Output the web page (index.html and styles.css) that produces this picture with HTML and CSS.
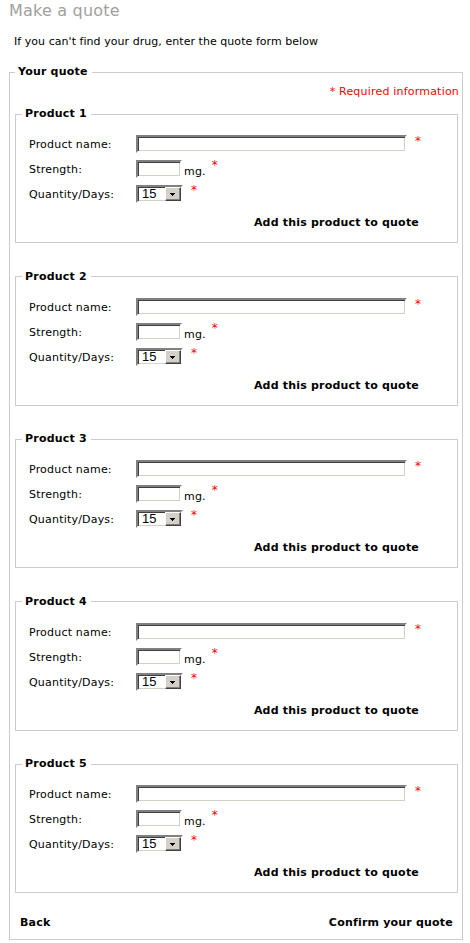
FILE: index.html
```html
<!DOCTYPE html>
<html>
<head>
<meta charset="utf-8">
<title>Make a quote</title>
<link rel="stylesheet" href="styles.css">
</head>
<body>
<h1 class="title">Make a quote</h1>
<p class="intro">If you can't find your drug, enter the quote form below</p>
<form class="quote-form">
<fieldset class="quote">
  <legend class="quote-legend">Your quote</legend>
  <p class="required">* Required information</p>

  <fieldset class="product">
    <legend class="product-legend">Product 1</legend>
    <div class="rows">
      <label class="label">Product name:</label>
      <div class="field"><input class="input input-name" type="text"><span class="req req-name">*</span></div>
      <label class="label">Strength:</label>
      <div class="field"><input class="input input-strength" type="text"><span class="unit">mg.</span><span class="req req-strength">*</span></div>
      <label class="label">Quantity/Days:</label>
      <div class="field"><span class="select"><select class="select-native"><option>15</option></select><span class="select-btn"><svg width="5" height="3" viewBox="0 0 5 3"><path d="M0 0h5v1H0zM1 1h3v1H1zM2 2h1v1H2z" fill="#000"/></svg></span></span><span class="req req-qty">*</span></div>
    </div>
    <div class="add"><a class="add-link" href="#">Add this product to quote</a></div>
  </fieldset>

  <fieldset class="product">
    <legend class="product-legend">Product 2</legend>
    <div class="rows">
      <label class="label">Product name:</label>
      <div class="field"><input class="input input-name" type="text"><span class="req req-name">*</span></div>
      <label class="label">Strength:</label>
      <div class="field"><input class="input input-strength" type="text"><span class="unit">mg.</span><span class="req req-strength">*</span></div>
      <label class="label">Quantity/Days:</label>
      <div class="field"><span class="select"><select class="select-native"><option>15</option></select><span class="select-btn"><svg width="5" height="3" viewBox="0 0 5 3"><path d="M0 0h5v1H0zM1 1h3v1H1zM2 2h1v1H2z" fill="#000"/></svg></span></span><span class="req req-qty">*</span></div>
    </div>
    <div class="add"><a class="add-link" href="#">Add this product to quote</a></div>
  </fieldset>

  <fieldset class="product">
    <legend class="product-legend">Product 3</legend>
    <div class="rows">
      <label class="label">Product name:</label>
      <div class="field"><input class="input input-name" type="text"><span class="req req-name">*</span></div>
      <label class="label">Strength:</label>
      <div class="field"><input class="input input-strength" type="text"><span class="unit">mg.</span><span class="req req-strength">*</span></div>
      <label class="label">Quantity/Days:</label>
      <div class="field"><span class="select"><select class="select-native"><option>15</option></select><span class="select-btn"><svg width="5" height="3" viewBox="0 0 5 3"><path d="M0 0h5v1H0zM1 1h3v1H1zM2 2h1v1H2z" fill="#000"/></svg></span></span><span class="req req-qty">*</span></div>
    </div>
    <div class="add"><a class="add-link" href="#">Add this product to quote</a></div>
  </fieldset>

  <fieldset class="product">
    <legend class="product-legend">Product 4</legend>
    <div class="rows">
      <label class="label">Product name:</label>
      <div class="field"><input class="input input-name" type="text"><span class="req req-name">*</span></div>
      <label class="label">Strength:</label>
      <div class="field"><input class="input input-strength" type="text"><span class="unit">mg.</span><span class="req req-strength">*</span></div>
      <label class="label">Quantity/Days:</label>
      <div class="field"><span class="select"><select class="select-native"><option>15</option></select><span class="select-btn"><svg width="5" height="3" viewBox="0 0 5 3"><path d="M0 0h5v1H0zM1 1h3v1H1zM2 2h1v1H2z" fill="#000"/></svg></span></span><span class="req req-qty">*</span></div>
    </div>
    <div class="add"><a class="add-link" href="#">Add this product to quote</a></div>
  </fieldset>

  <fieldset class="product">
    <legend class="product-legend">Product 5</legend>
    <div class="rows">
      <label class="label">Product name:</label>
      <div class="field"><input class="input input-name" type="text"><span class="req req-name">*</span></div>
      <label class="label">Strength:</label>
      <div class="field"><input class="input input-strength" type="text"><span class="unit">mg.</span><span class="req req-strength">*</span></div>
      <label class="label">Quantity/Days:</label>
      <div class="field"><span class="select"><select class="select-native"><option>15</option></select><span class="select-btn"><svg width="5" height="3" viewBox="0 0 5 3"><path d="M0 0h5v1H0zM1 1h3v1H1zM2 2h1v1H2z" fill="#000"/></svg></span></span><span class="req req-qty">*</span></div>
    </div>
    <div class="add"><a class="add-link" href="#">Add this product to quote</a></div>
  </fieldset>

  <div class="footer">
    <a class="footer-link" href="#">Back</a>
    <a class="footer-link" href="#">Confirm your quote</a>
  </div>
</fieldset>
</form>
</body>
</html>
```

FILE: styles.css
```css
html, body {
  margin: 0;
  padding: 0;
  background: #fff;
}

body {
  font-family: "DejaVu Sans", Verdana, sans-serif;
  font-size: 11px;
  letter-spacing: 0.2px;
  color: #000;
}

.title {
  margin: 0;
  padding: 2px 0 0 9px;
  font-size: 16px;
  font-weight: normal;
  line-height: 18px;
  color: #a0a0a0;
}

.intro {
  margin: 15px 0 0 0;
  padding-left: 14px;
  font-size: 11px;
  letter-spacing: 0.05px;
  line-height: 14px;
}

.quote-form {
  margin: 0;
}

.quote {
  margin: 16px 7px 0 9px;
  padding: 6px 4px 9px 5px;
  border: 1px solid #cccccc;
  min-width: 0;
}

.quote-legend {
  padding: 0 4px 0 3px;
  font-weight: bold;
  font-size: 11px;
  line-height: 14px;
}

.required {
  margin: 0 -1px 0 0;
  text-align: right;
  color: #ff0000;
  font-size: 11px;
  line-height: 14px;
}

.product {
  margin: 8px 0 0 0;
  padding: 14px 0 12px 13px;
  border: 1px solid #cccccc;
  min-width: 0;
}

.product + .product {
  margin-top: 26.5px;
}

.product-legend {
  margin-left: -7px;
  padding: 0 4px 0 3px;
  font-weight: bold;
  line-height: 14px;
}

.rows {
  display: grid;
  grid-template-columns: 107px 1fr;
  row-gap: 7px;
  align-items: start;
}

.label {
  line-height: 14px;
  padding-top: 3px;
}

.field {
  display: flex;
  align-items: flex-end;
  height: 18px;
}

.input {
  box-sizing: border-box;
  height: 18px;
  margin: 0;
  padding: 0 2px;
  border-style: solid;
  border-width: 2px;
  border-color: #808080 #ffffff #ffffff #808080;
  box-shadow: inset 1px 1px 0 #404040, inset -1px -1px 0 #d4d0c8;
  background: #fff;
  font-family: "Liberation Sans", Arial, sans-serif;
  font-size: 13px;
  outline: none;
}

.input-name {
  width: 271px;
}

.input-strength {
  width: 46px;
}

.unit {
  margin-left: 2px;
  line-height: 13px;
}

.req {
  align-self: flex-start;
  color: #ff0000;
  line-height: 11px;
  font-size: 12px;
}

.req-name {
  margin-left: 8px;
  margin-top: 1px;
}

.req-strength {
  margin-left: 6px;
  margin-top: 0;
}

.req-qty {
  margin-left: 8px;
  margin-top: 0;
}

.select {
  position: relative;
  display: inline-block;
  width: 47px;
  height: 18px;
}

.select-native {
  -webkit-appearance: none;
  appearance: none;
  box-sizing: border-box;
  width: 47px;
  height: 18px;
  margin: 0;
  padding: 0 0 0 4px;
  border-style: solid;
  border-width: 2px;
  border-color: #808080 #ffffff #ffffff #808080;
  box-shadow: inset 1px 1px 0 #404040, inset -1px -1px 0 #d4d0c8;
  background: #fff;
  font-family: "Liberation Sans", Arial, sans-serif;
  font-size: 13px;
  line-height: 14px;
  color: #000;
  border-radius: 0;
  outline: none;
}

.select-btn {
  position: absolute;
  right: 2px;
  top: 2px;
  box-sizing: border-box;
  width: 16px;
  height: 14px;
  background: #d4d0c8;
  border-style: solid;
  border-width: 1px;
  border-color: #ffffff #404040 #404040 #ffffff;
  box-shadow: inset -1px -1px 0 #808080;
  display: flex;
  align-items: center;
  justify-content: center;
}

.select-btn svg {
  display: block;
  margin: 1px 0 0 -1px;
}

.add {
  margin-top: 13px;
  padding-right: 38px;
  text-align: right;
  line-height: 14px;
}

.add-link,
.footer-link {
  color: #000;
  font-weight: bold;
  text-decoration: none;
}

.footer {
  display: flex;
  justify-content: space-between;
  margin-top: 23px;
  padding: 0 5px;
  line-height: 14px;
}
```
